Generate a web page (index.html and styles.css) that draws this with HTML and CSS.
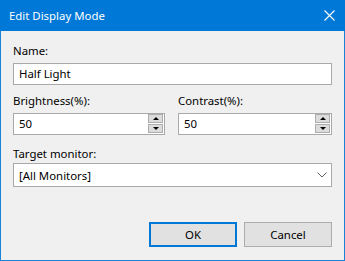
FILE: index.html
```html
<!DOCTYPE html>
<html lang="en">
<head>
    <meta charset="UTF-8">
    <title>Edit Display Mode</title>
    <link rel="stylesheet" href="styles.css">
</head>
<body>
    <div class="window">
        <div class="titlebar">
            <span class="title">Edit Display Mode</span>
            <svg class="close" width="11" height="11" viewBox="0 0 11 11">
                <path d="M0.5 0.5 L10.5 10.5 M10.5 0.5 L0.5 10.5" stroke="#fff" stroke-width="1.1" fill="none"/>
            </svg>
        </div>
        <div class="content">
            <div class="field">
                <div class="label">Name:</div>
                <div class="textbox">Half Light</div>
            </div>
            <div class="row">
                <div class="field brightness">
                    <div class="label">Brightness(%):</div>
                    <div class="textbox spin">
                        <span>50</span>
                        <div class="spin-buttons">
                            <div class="spin-btn"><span class="arrow up"></span></div>
                            <div class="spin-btn"><span class="arrow down"></span></div>
                        </div>
                    </div>
                </div>
                <div class="field contrast">
                    <div class="label">Contrast(%):</div>
                    <div class="textbox spin">
                        <span>50</span>
                        <div class="spin-buttons">
                            <div class="spin-btn"><span class="arrow up"></span></div>
                            <div class="spin-btn"><span class="arrow down"></span></div>
                        </div>
                    </div>
                </div>
            </div>
            <div class="field target">
                <div class="label">Target monitor:</div>
                <div class="combo">
                    <span>[All Monitors]</span>
                    <svg width="10" height="6" viewBox="0 0 10 6">
                        <path d="M0.5 0.5 L5 5 L9.5 0.5" stroke="#606060" stroke-width="1" fill="none"/>
                    </svg>
                </div>
            </div>
            <div class="buttons">
                <div class="button default">OK</div>
                <div class="button">Cancel</div>
            </div>
        </div>
    </div>
</body>
</html>
```

FILE: styles.css
```css
body {
    margin: 0;
    font-family: "Segoe UI", "Noto Sans", sans-serif;
    font-size: 11.4px;
    color: #000;
}
.window {
    width: 345px;
    height: 261px;
    box-sizing: border-box;
    border: 1px solid #1883d7;
    border-top: none;
    background: #f0f0f0;
    display: flex;
    flex-direction: column;
}
.titlebar {
    height: 31px;
    margin: 0 -1px;
    background: #0078d7;
    color: #fff;
    display: flex;
    align-items: center;
    justify-content: space-between;
    padding: 0 10px 0 9px;
}
.title {
    line-height: 16px;
}
.close {
    display: block;
}
.content {
    padding: 12px 12px 0 12px;
    display: flex;
    flex-direction: column;
}
.label {
    line-height: 16px;
    margin-bottom: 4px;
}
.textbox {
    height: 22px;
    box-sizing: border-box;
    border: 1px solid #a9a9a9;
    background: #fff;
    padding: 0 5px;
    line-height: 19px;
}
.row {
    display: flex;
    gap: 13px;
    margin-top: 8px;
}
.brightness {
    flex: 0 0 152px;
}
.contrast {
    flex: 1;
}
.spin {
    display: flex;
    justify-content: space-between;
    padding-right: 1px;
}
.spin-buttons {
    display: flex;
    flex-direction: column;
    justify-content: space-between;
    padding: 0 0 1px;
}
.spin-btn {
    width: 15px;
    height: 9px;
    box-sizing: border-box;
    background: #dcdcdc;
    border: 1px solid #adadad;
    display: flex;
    align-items: center;
    justify-content: center;
}
.arrow {
    width: 0;
    height: 0;
    border-left: 3px solid transparent;
    border-right: 3px solid transparent;
}
.arrow.up {
    border-bottom: 3px solid #000;
}
.arrow.down {
    border-top: 3px solid #000;
}
.target {
    margin-top: 11px;
}
.target .label {
    margin-bottom: 1px;
}
.combo {
    height: 24px;
    box-sizing: border-box;
    border: 1px solid #a9a9a9;
    background: #fff;
    padding: 0 4px 0 5px;
    display: flex;
    align-items: center;
    justify-content: space-between;
}
.buttons {
    display: flex;
    justify-content: flex-end;
    gap: 7px;
    margin-top: 35px;
}
.button {
    width: 88px;
    height: 25px;
    box-sizing: border-box;
    border: 1px solid #adadad;
    background: #e1e1e1;
    display: flex;
    align-items: center;
    justify-content: center;
}
.button.default {
    border: 2px solid #0078d7;
}
```
